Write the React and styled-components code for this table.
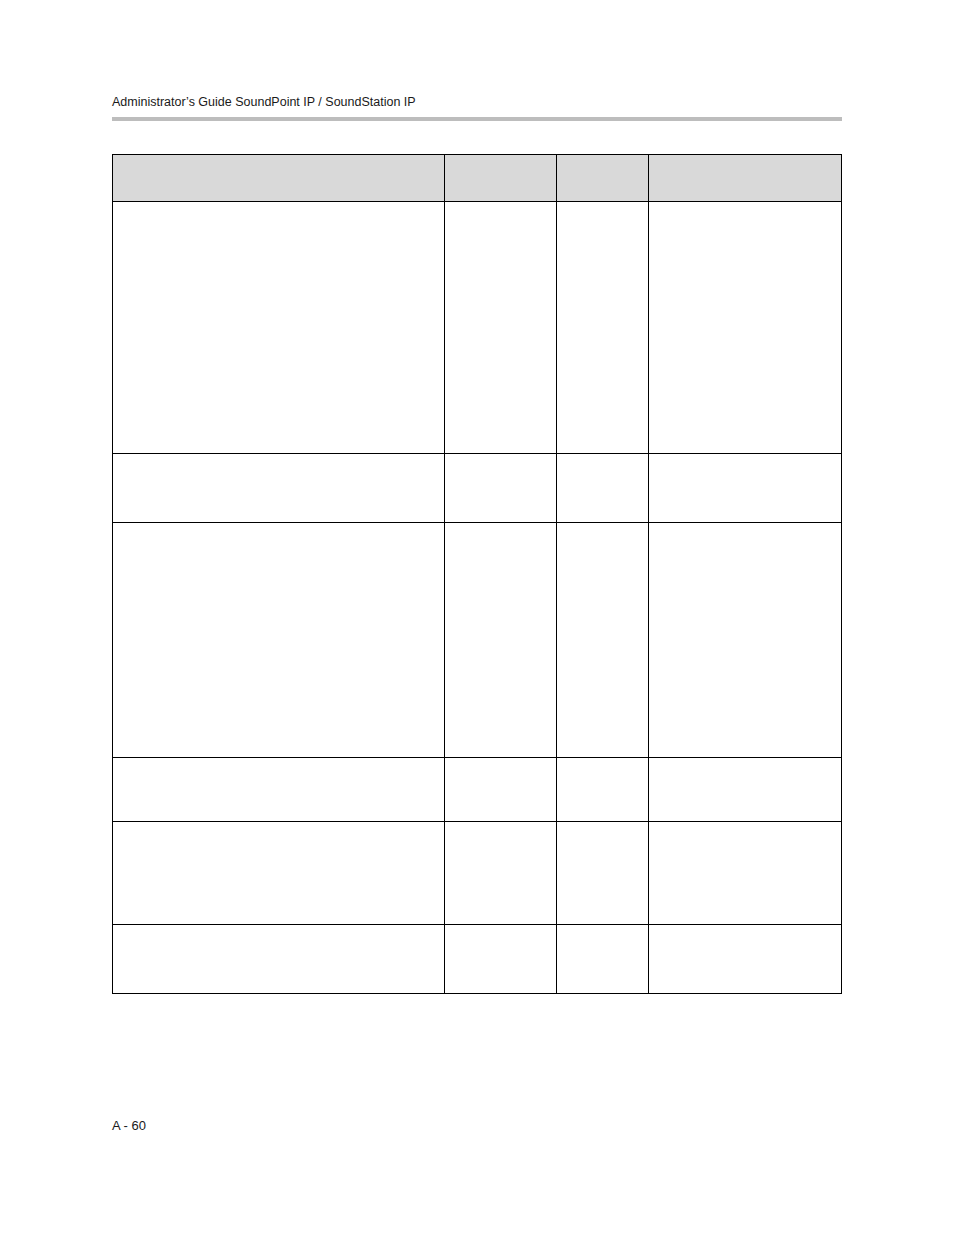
import React from "react";
import styled, { createGlobalStyle } from "styled-components";

const GlobalStyle = createGlobalStyle`
  html, body {
    margin: 0;
    padding: 0;
    background: #fff;
  }
  body {
    font-family: "Liberation Sans", Arial, sans-serif;
    color: #111;
  }
`;

const Page = styled.div`
  width: 954px;
  height: 1235px;
  box-sizing: border-box;
  padding: 95px 0 0 112px;
  display: flex;
  flex-direction: column;
`;

const RunningHead = styled.div`
  font-size: 12.5px;
  line-height: 15px;
  color: #1a1a1a;
`;

const Rule = styled.div`
  width: 730px;
  height: 4px;
  margin-top: 7px;
  background: #bdbdbd;
`;

const Table = styled.table`
  margin-top: 33px;
  width: 730px;
  border-collapse: collapse;
  table-layout: fixed;
`;

const Row = styled.tr`
  height: ${(p) => p.$h}px;
`;

const Cell = styled.td`
  border: 1px solid #000;
  padding: 0;
  background: ${(p) => (p.$head ? "#d9d9d9" : "#fff")};
`;

const Folio = styled.div`
  margin-top: 124px;
  font-size: 13px;
  line-height: 15px;
  color: #1a1a1a;
`;

const widths = [332, 112, 92, 193];
const rowHeights = [252, 69, 235, 64, 103, 69];

export default function App() {
  return (
    <>
      <GlobalStyle />
      <Page>
        <RunningHead>Administrator’s Guide SoundPoint IP / SoundStation IP</RunningHead>
        <Rule />
        <Table>
          <colgroup>
            {widths.map((w, i) => (
              <col key={i} style={{ width: w }} />
            ))}
          </colgroup>
          <tbody>
            <Row $h={47}>
              {widths.map((_, i) => (
                <Cell key={i} $head />
              ))}
            </Row>
            {rowHeights.map((h, r) => (
              <Row key={r} $h={h}>
                {widths.map((_, i) => (
                  <Cell key={i} />
                ))}
              </Row>
            ))}
          </tbody>
        </Table>
        <Folio>A - 60</Folio>
      </Page>
    </>
  );
}
